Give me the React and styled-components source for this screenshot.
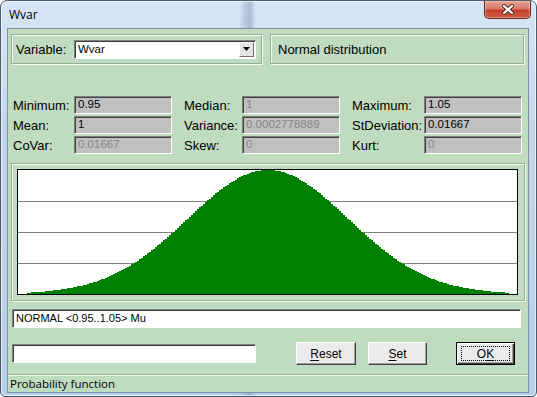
import React from "react";
import styled, { createGlobalStyle } from "styled-components";

const CHART_W = 499;
const CHART_H = 124;

// stepped normal curve, mean 1, sd 0.01667 over 0.95..1.05 (±3 sd)
const buildCurve = () => {
  const left = 9;
  const right = 491;
  const mid = (left + right) / 2;
  const sd = (right - left) / 6;
  const step = 2;
  let d = `M${left} ${CHART_H}`;
  for (let x = left; x < right; x += step) {
    const z = (x + step / 2 - mid) / sd;
    const y = CHART_H - CHART_H * Math.exp(-(z * z) / 2);
    d += ` L${x} ${y.toFixed(1)} L${x + step} ${y.toFixed(1)}`;
  }
  d += ` L${right} ${CHART_H} Z`;
  return d;
};

const curvePath = buildCurve();

const stats = [
  {
    label: 61,
    rows: [
      { name: "Minimum:", value: "0.95" },
      { name: "Mean:", value: "1" },
      { name: "CoVar:", value: "0.01667", disabled: true },
    ],
  },
  {
    label: 58,
    rows: [
      { name: "Median:", value: "1", disabled: true },
      { name: "Variance:", value: "0.0002778889", disabled: true },
      { name: "Skew:", value: "0", disabled: true },
    ],
  },
  {
    label: 72,
    rows: [
      { name: "Maximum:", value: "1.05" },
      { name: "StDeviation:", value: "0.01667" },
      { name: "Kurt:", value: "0", disabled: true },
    ],
  },
];

const App = () => {
  return (
    <>
      <GlobalStyle />
      <Window>
        <TitleBar>
          <Title>Wvar</Title>
          <CloseButton>
            <svg width="14" height="11" viewBox="0 0 14 11">
              <path d="M3 2 L11 9 M11 2 L3 9" stroke="#4a2a22" strokeWidth="4" strokeLinecap="round" />
              <path d="M3 2 L11 9 M11 2 L3 9" stroke="#fff" strokeWidth="2.2" strokeLinecap="round" />
            </svg>
          </CloseButton>
        </TitleBar>
        <Client>
          <TopRow>
            <VariablePanel>
              <FieldLabel $width={58}>Variable:</FieldLabel>
              <Combo>
                <ComboText>Wvar</ComboText>
                <ComboButton>
                  <svg width="7" height="4" viewBox="0 0 7 4">
                    <path d="M0 0 H7 L3.5 4 Z" fill="#000" />
                  </svg>
                </ComboButton>
              </Combo>
            </VariablePanel>
            <InfoPanel>Normal distribution</InfoPanel>
          </TopRow>

          <StatsRow>
            {stats.map((col, i) => (
              <StatCol key={i} $label={col.label}>
                {col.rows.map((r) => (
                  <React.Fragment key={r.name}>
                    <FieldLabel>{r.name}</FieldLabel>
                    <ValueBox $disabled={r.disabled}>{r.value}</ValueBox>
                  </React.Fragment>
                ))}
              </StatCol>
            ))}
          </StatsRow>

          <ChartPanel>
            <Chart>
              <svg width={CHART_W} height={CHART_H} viewBox={`0 0 ${CHART_W} ${CHART_H}`}>
                {[31, 62, 93].map((y) => (
                  <line key={y} x1="0" x2={CHART_W} y1={y + 0.5} y2={y + 0.5} stroke="#808080" strokeWidth="1" />
                ))}
                <path d={curvePath} fill="#008000" shapeRendering="crispEdges" />
              </svg>
            </Chart>
          </ChartPanel>

          <ExprBox>NORMAL &lt;0.95..1.05&gt; Mu</ExprBox>

          <BottomRow>
            <EmptyBox />
            <Button $ml={40} $w={60}>
              <u>R</u>eset
            </Button>
            <Button $ml={12} $w={59}>
              <u>S</u>et
            </Button>
            <Button $ml={29} $w={59} $default>
              <FocusRect>
                O<u>K</u>
              </FocusRect>
            </Button>
          </BottomRow>

          <StatusBar>Probability function</StatusBar>
        </Client>
      </Window>
    </>
  );
};

const GlobalStyle = createGlobalStyle`
  html, body {
    margin: 0;
    padding: 0;
    background: #fff;
  }
`;

const Window = styled.div`
  box-sizing: border-box;
  width: 537px;
  height: 397px;
  display: flex;
  flex-direction: column;
  border: 1px solid #4c5a6a;
  border-radius: 7px 7px 5px 5px;
  overflow: hidden;
  background: linear-gradient(
      90deg,
      rgba(0, 0, 0, 0) 44.5%,
      rgba(80, 110, 145, 0.22) 45.6%,
      rgba(80, 110, 145, 0.32) 46.6%,
      rgba(0, 0, 0, 0) 47.6%
    ),
    linear-gradient(180deg, #d7e6f5 0%, #c3d8ee 30%, #b8cfe9 100%);
  box-shadow: inset 0 0 0 1px rgba(255, 255, 255, 0.6);
  font-family: "Liberation Sans", Arial, sans-serif;
`;

const TitleBar = styled.div`
  height: 27px;
  flex: none;
  display: flex;
  align-items: flex-start;
  justify-content: space-between;
  padding-left: 8px;
`;

const Title = styled.div`
  margin-top: 5px;
  font-family: "Open Sans", "Noto Sans", sans-serif;
  font-size: 12px;
  color: #000;
`;

const CloseButton = styled.div`
  width: 47px;
  height: 18px;
  margin-right: 5px;
  box-sizing: border-box;
  display: flex;
  align-items: center;
  justify-content: center;
  border: 1px solid #5a2a22;
  border-top: none;
  border-radius: 0 0 5px 5px;
  background: linear-gradient(180deg, #e6a595 0%, #d9786a 45%, #c4412c 55%, #cf5a3e 100%);
  box-shadow: inset 0 0 0 1px rgba(255, 210, 200, 0.45);
`;

const Client = styled.div`
  flex: 1;
  margin: 0 7px 3px 6px;
  display: flex;
  flex-direction: column;
  border: 1px solid #7d91a7;
  background: #c0dcc0;
`;

const TopRow = styled.div`
  display: flex;
  gap: 8px;
  margin-top: 5px;
  padding-left: 3px;
`;

const Etched = styled.div`
  box-sizing: border-box;
  height: 30px;
  border: 1px solid #96ae96;
  box-shadow: inset 1px 1px 0 #f4faf4, 1px 1px 0 #f4faf4;
`;

const VariablePanel = styled(Etched)`
  width: 251px;
  display: flex;
  align-items: center;
  padding-left: 4px;
`;

const InfoPanel = styled(Etched)`
  width: 254px;
  display: flex;
  align-items: center;
  padding-left: 7px;
  font-size: 13px;
  color: #000;
`;

const FieldLabel = styled.div`
  width: ${(p) => (p.$width ? `${p.$width}px` : "auto")};
  font-size: 13px;
  color: #000;
  white-space: nowrap;
`;

const sunken = `
  box-sizing: border-box;
  border-top: 1px solid #808080;
  border-left: 1px solid #808080;
  border-right: 1px solid #ffffff;
  border-bottom: 1px solid #ffffff;
  box-shadow: inset 1px 1px 0 #404040;
`;

const Combo = styled.div`
  ${sunken}
  width: 182px;
  height: 19px;
  background: #fff;
  display: flex;
  align-items: stretch;
`;

const ComboText = styled.div`
  flex: 1;
  padding: 2px 0 0 3px;
  font-size: 11.5px;
  color: #000;
`;

const ComboButton = styled.div`
  width: 15px;
  margin: 1px 1px 1px 0;
  box-sizing: border-box;
  display: flex;
  align-items: center;
  justify-content: center;
  background: #e4e4e4;
  border-top: 1px solid #fff;
  border-left: 1px solid #fff;
  border-right: 1px solid #707070;
  border-bottom: 1px solid #707070;
`;

const StatsRow = styled.div`
  display: flex;
  gap: 12px;
  margin-top: 32px;
  padding-left: 5px;
`;

const StatCol = styled.div`
  display: grid;
  grid-template-columns: ${(p) => p.$label}px 98px;
  grid-auto-rows: 18px;
  row-gap: 2px;
  align-items: center;
`;

const ValueBox = styled.div`
  ${sunken}
  height: 18px;
  background: #c0c0c0;
  padding: 1px 0 0 3px;
  font-size: 11.5px;
  color: ${(p) => (p.$disabled ? "#858585" : "#000")};
  white-space: nowrap;
  overflow: hidden;
`;

const ChartPanel = styled.div`
  box-sizing: border-box;
  width: 514px;
  height: 138px;
  margin: 9px 0 0 3px;
  padding: 5px 6px 5px 5px;
  border: 1px solid #96ae96;
  box-shadow: inset 1px 1px 0 #f4faf4, 1px 1px 0 #f4faf4;
`;

const Chart = styled.div`
  width: ${CHART_W}px;
  height: ${CHART_H}px;
  border: 1px solid #000;
  background: #fff;
  svg {
    display: block;
  }
`;

const ExprBox = styled.div`
  ${sunken}
  width: 509px;
  height: 19px;
  margin: 8px 0 0 4px;
  background: #fff;
  padding: 2px 0 0 3px;
  font-size: 11px;
  color: #000;
`;

const BottomRow = styled.div`
  display: flex;
  align-items: center;
  height: 23px;
  margin-top: 14px;
  padding-left: 4px;
`;

const EmptyBox = styled.div`
  ${sunken}
  width: 244px;
  height: 19px;
  background: #fff;
`;

const Button = styled.div`
  box-sizing: border-box;
  width: ${(p) => p.$w}px;
  height: 23px;
  margin-left: ${(p) => p.$ml}px;
  display: flex;
  align-items: center;
  justify-content: center;
  background: #ebebeb;
  font-size: 12px;
  color: #000;
  border-top: 1px solid #fff;
  border-left: 1px solid #fff;
  border-right: 1px solid #404040;
  border-bottom: 1px solid #404040;
  box-shadow: inset -1px -1px 0 #a0a0a0;
  ${(p) =>
    p.$default &&
    `
    border: 1px solid #000;
    box-shadow: inset 1px 1px 0 #fff, inset -1px -1px 0 #404040, inset -2px -2px 0 #a0a0a0;
  `}
  u {
    text-decoration-thickness: 1px;
    text-underline-offset: 2px;
  }
`;

const FocusRect = styled.div`
  box-sizing: border-box;
  width: 49px;
  height: 15px;
  display: flex;
  align-items: center;
  justify-content: center;
  border: 1px dotted #000;
`;

const StatusBar = styled.div`
  margin-top: auto;
  height: 18px;
  box-sizing: border-box;
  border-top: 1px solid #9cb49c;
  box-shadow: inset 0 1px 0 #eef6ee;
  padding: 1px 0 0 2px;
  font-family: "Open Sans", "Noto Sans", sans-serif;
  font-size: 11.5px;
  color: #000;
`;

export default App;
